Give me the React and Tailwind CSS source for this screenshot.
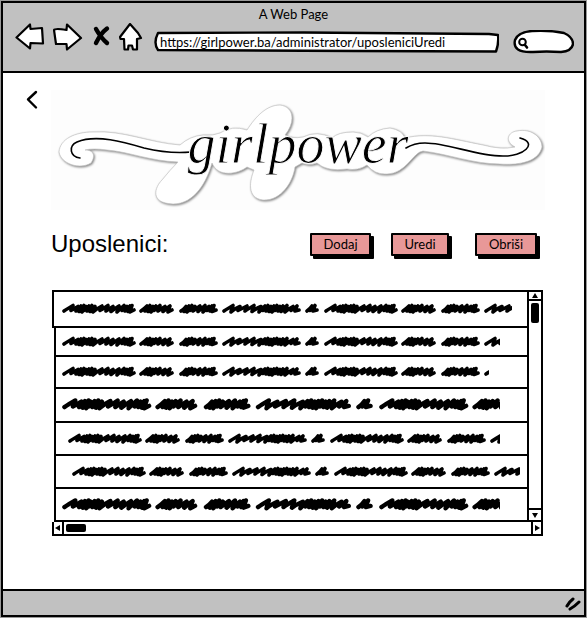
import React from "react";

const stroke = {
  fill: "none",
  stroke: "#000",
  strokeLinecap: "round",
  strokeLinejoin: "round",
};

// Each word is a start position followed by the advance of every pen stroke.
const WORDS = [
  [2, [7, 5, 3, 3, 2, 3, 3, 3, 7, 6, 5, 6, 5, 3, 3, 2]],
  [79, [4, 3, 3, 3, 4, 5, 5]],
  [119, [3, 3, 3, 3, 5, 5, 4, 3, 2]],
  [162, [7, 7, 7, 7, 7, 4, 3, 3, 3, 3, 3, 3, 4, 6, 4]],
  [245, [3, 3]],
];
const PERIOD = 262;

function zigzag(offset) {
  let d = "";
  WORDS.forEach(([start, steps], w) => {
    let x = offset + start;
    d += `M${x} 10`;
    steps.forEach((step, i) => {
      const top = 4.5 + ((i * 2 + w) % 3) / 2;
      const low = 9.5 + ((i * 5 + w) % 4) / 2;
      d += `Q${x + 3} 8 ${x + step + 2} ${top}Q${x + step + 1} 7 ${x + step} ${low}`;
      x += step;
    });
    d += `L${x + 4} 9`;
  });
  return d;
}

const SCRIBBLE = zigzag(0) + zigzag(PERIOD);

function Scribble({ width, large }) {
  const scale = large ? 1.21 : 1;
  const height = large ? 20 : 16;
  return (
    <svg
      className="block shrink-0 overflow-hidden"
      width={width}
      height={height}
      viewBox={`0 0 ${width / scale} ${height / scale}`}
      aria-hidden="true"
    >
      <path d={SCRIBBLE} {...stroke} strokeWidth="3.6" />
    </svg>
  );
}

const ROWS = [
  { box: "h-9 pl-2", width: 450 },
  { box: "h-[29px] ml-0.5 pl-1.5", width: 438 },
  { box: "h-8 ml-0.5 pl-1.5", width: 427 },
  { box: "h-[34px] ml-0.5 pl-1.5", width: 438, large: true },
  { box: "h-[33px] ml-0.5 pl-3", width: 432 },
  { box: "h-[33px] ml-0.5 pl-4", width: 448 },
  { box: "h-[33px] ml-0.5 pl-1.5", width: 438, large: true },
];

function NavButton({ label, className, viewBox, children }) {
  return (
    <button type="button" aria-label={label} className={`h-[30px] shrink-0 ${className}`}>
      <svg className="block h-full w-full" viewBox={viewBox} {...stroke} strokeWidth="2.200">
        {children}
      </svg>
    </button>
  );
}

function BrowserHeader() {
  return (
    <header className="border-b-2 border-black bg-[#c1c1c1] pb-4">
      <div className="h-5 text-center text-[13px] leading-[22px]">A Web Page</div>
      <div className="flex h-8 items-end gap-2 pr-2.5 pl-3">
        <NavButton label="Back" className="mb-0.5 w-[30px]" viewBox="15 23 30 30">
          <path d="M16.5 37.5 30 24.5 30.5 29 42 28 43 43.5 30.5 43 30 48.500Z" fill="#fff" />
        </NavButton>
        <NavButton label="Forward" className="mb-0.5 w-[30px]" viewBox="53 23 30 30">
          <path d="M54 30Q55 28 66.500 30L67 24.500 81 38 67 49.500 66.500 44 56 44Z" fill="#fff" />
        </NavButton>
        <NavButton label="Stop" className="mb-0.5 w-5" viewBox="91 23 20 30">
          <path d="M96 29Q101 38 107 43M107 28.500Q101 33 96 43" strokeWidth="4.400" />
        </NavButton>
        <NavButton label="Home" className="mb-0.5 w-6" viewBox="119 23 24 30">
          <path d="M130 24 120 37 120.500 39 124 39 124.500 49.500 128 49.500 128.500 45.500 132 45.500 133 49.500 137 49.500 137 39 141 38 138 33Z" fill="#fff" />
        </NavButton>
        <div className="relative ml-[3px] h-6 min-w-0 flex-1">
          <svg className="absolute inset-0 h-full w-full" viewBox="0 0 345 24" preserveAspectRatio="none" aria-hidden="true">
            <path d="M4 2 150 1.500 335 3 344 4Q345 12 342 20.500L200 20 4 19Q-1 12 4 2Z" {...stroke} fill="#fff" strokeWidth="2.400" />
          </svg>
          <input
            type="text"
            aria-label="Address"
            defaultValue="https://girlpower.ba/administrator/uposleniciUredi"
            className="relative block h-[22px] w-full bg-transparent pl-1.5 text-[13px] leading-5 outline-none"
          />
        </div>
        <label className="relative ml-1.5 block h-[25px] w-[61px] shrink-0">
          <svg className="absolute inset-0 h-full w-full" viewBox="514 29 61 25" aria-hidden="true" {...stroke}>
            <path d="M516 39Q519 31 533 30 551 29 565 32 574 36 574 43 573 50 562 51 547 50 534 51 513 52 516 39Z" fill="#fff" strokeWidth="2.400" />
            <ellipse cx="523.500" cy="41" rx="3.300" ry="3.300" strokeWidth="2" />
            <path d="M526 44 528 46.500" strokeWidth="2.600" />
          </svg>
          <input type="search" aria-label="Search" className="relative block h-6 w-full bg-transparent pr-2 pl-5 text-[12px] outline-none" />
        </label>
      </div>
    </header>
  );
}

function Logo() {
  return (
    <svg className="block w-full bg-[#fdfdfd]" viewBox="51 90 494 120" role="img" aria-label="girlpower">
      <path
        className="drop-shadow-[1px_1px_1px_rgba(0,0,0,0.5)]"
        d="M59 152C60 139 75 132 93 132C123 130 150 143 180 145Q190 136 203 135Q213 136 220 133Q232 125 247 130C256 116 267 105 280 105C295 107 295 123 285 135Q292 139 303 137Q317 130 332 138Q338 132 353 132Q361 132 368 137Q376 129 390 128Q402 130 405 138C430 132 452 139 483 145Q501 150 515 147C504 141 508 132 517 131C531 128 542 137 542 147C538 164 514 165 500 164C474 164 448 154 423 151C413 152 406 174 387 174Q375 175 367 165Q358 171 347 169Q327 172 317 163Q310 166 302 163L295 167C293 182 281 201 263 200C246 198 250 180 254 170L247 167C238 174 218 178 212 163C207 181 195 204 173 204C149 203 155 187 162 180Q170 170 178 162C150 161 130 152 107 150Q93 148 85 150C95 150 95 157 91 163C80 170 61 164 59 152Z"
        fill="#fff"
        stroke="#c4c4c4"
        strokeWidth="0.7"
      />
      <path d="M80 158C70 157 68 146 77 142C96 134 124 142 144 148Q169 154 191 152" {...stroke} strokeWidth="1.600" />
      <path d="M406 148Q414 143 425 143C449 143 475 156 503 156C523 157 539 143 520 138" {...stroke} strokeWidth="1.600" />
      <text
        x="298"
        y="163"
        textAnchor="middle"
        stroke="#fff"
        strokeWidth="0.9"
        className="font-['Liberation_Serif',serif] text-[56px] italic"
      >
        girlpower
      </text>
    </svg>
  );
}

function ActionButton({ className, children }) {
  return (
    <button
      type="button"
      className={`h-[23px] rounded-[1px] border-2 border-black bg-[#e89898] text-center text-[13px] leading-[18px] shadow-[3px_3px_0_#000] ${className}`}
    >
      {children}
    </button>
  );
}

function ScrollArrow({ label, path, className }) {
  return (
    <button type="button" aria-label={label} className={`flex shrink-0 items-center justify-center border-black ${className}`}>
      <svg className="block" width="8" height="8" viewBox="0 0 8 8">
        <path d={path} />
      </svg>
    </button>
  );
}

function EmployeeList() {
  return (
    <div className="mt-8 mr-0.5 ml-px">
      <div className="flex border-t-2 border-black">
        <ul aria-label="Uposlenici" className="min-w-0 flex-1">
          {ROWS.map((row, i) => (
            <li key={i} className={`flex items-center overflow-hidden border-b-2 border-l-2 border-black ${row.box}`}>
              <Scribble width={row.width} large={row.large} />
            </li>
          ))}
        </ul>
        <div className="flex w-4 flex-col items-stretch border-x-2 border-b-2 border-black">
          <ScrollArrow label="Scroll up" path="M4 1 7 6H1Z" className="h-[9px] border-b-2" />
          <div className="mx-auto mt-0.5 h-5 w-2 rounded-xs bg-black" />
          <div className="flex-1" />
          <ScrollArrow label="Scroll down" path="M1 2H7L4 7Z" className="h-3 border-t-2" />
        </div>
      </div>
      <div className="flex h-3.5 items-stretch border-x-2 border-b-2 border-black">
        <ScrollArrow label="Scroll left" path="M6 1V7L1 4Z" className="w-2.5 border-r-2" />
        <div className="my-auto ml-0.5 h-2 w-5 rounded-xs bg-black" />
        <div className="flex-1" />
        <ScrollArrow label="Scroll right" path="M2 1 7 4 2 7Z" className="w-2.5 border-l-2" />
      </div>
    </div>
  );
}

export default function App() {
  return (
    <div className="flex min-h-screen bg-[#999] p-px font-['Lato','Open_Sans',sans-serif] text-black">
      <div className="flex min-w-0 flex-1 flex-col border-2 border-black bg-white">
        <BrowserHeader />
        <main className="flex flex-1 pt-[17px] pr-[39px] pb-8">
          <div className="w-12 shrink-0">
            <button type="button" aria-label="Nazad" className="ml-5 block h-5 w-5">
              <svg className="block h-5 w-5" viewBox="0 0 20 20" {...stroke} strokeWidth="2.400">
                <path d="M13 2 5 9.500 13 17.500" />
              </svg>
            </button>
          </div>
          <div className="min-w-0 flex-1">
            <Logo />
            <div className="mt-5 flex h-7 items-center gap-5 pr-2">
              <h1 className="flex-1 font-['Liberation_Sans',Arial,sans-serif] text-[24px] leading-7">Uposlenici:</h1>
              <ActionButton className="w-[61px]">Dodaj</ActionButton>
              <ActionButton className="w-[58px]">Uredi</ActionButton>
              <ActionButton className="ml-1.5 w-[62px]">Obriši</ActionButton>
            </div>
            <EmployeeList />
          </div>
        </main>
        <footer className="flex h-[26px] items-center justify-end border-t-2 border-black bg-[#c1c1c1] pr-0.5">
          <svg className="block" width="18" height="16" viewBox="0 0 18 16" aria-hidden="true" {...stroke} strokeWidth="3">
            <path d="M3 11Q5 7 9 4M6 14Q10 12 15 7" />
          </svg>
        </footer>
      </div>
    </div>
  );
}
